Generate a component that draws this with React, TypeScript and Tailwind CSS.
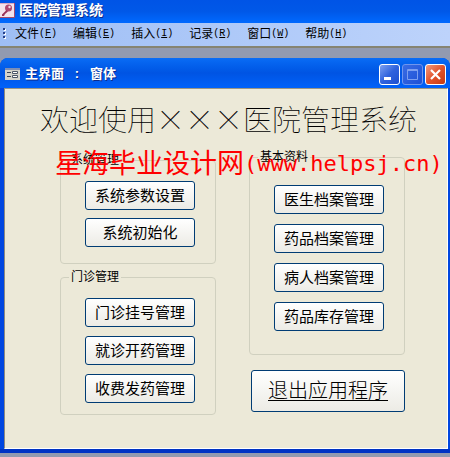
import React from "react";

const menuData = [
  { label: "文件", accessKey: "F" },
  { label: "编辑", accessKey: "E" },
  { label: "插入", accessKey: "I" },
  { label: "记录", accessKey: "R" },
  { label: "窗口", accessKey: "W" },
  { label: "帮助", accessKey: "H" },
];

const systemButtons = ["系统参数设置", "系统初始化"];
const clinicButtons = ["门诊挂号管理", "就诊开药管理", "收费发药管理"];
const dataButtons = [
  "医生档案管理",
  "药品档案管理",
  "病人档案管理",
  "药品库存管理",
];

const App = () => {
  return (
    <div className="flex min-h-screen flex-col bg-[#929ab0] font-['Liberation_Sans','Noto_Sans_CJK_SC',sans-serif] text-black">
      <header className="flex h-[23px] items-center gap-1 bg-linear-to-b from-[#0054e6] via-[#0058e8] to-[#0069ff] pb-1">
        <KeyIcon />
        <span className="text-sm leading-4 font-bold text-white [text-shadow:1px_1px_#0a2a8c]">
          医院管理系统
        </span>
      </header>
      <MenuBar />
      <main className="mt-[10px] mb-1 flex flex-1 flex-col rounded-t-lg border-b-4 border-[#0033c4] bg-[#0046e0]">
        <WindowTitle />
        <div className="relative mr-[2px] ml-1 flex-1 border border-t-[#9b9684] border-r-white border-b-white border-l-[#8c8a80] bg-[#ece9d8] pb-8">
          <h1 className="pt-[10px] pl-[35px] text-[29px] leading-[38px] font-thin whitespace-nowrap">
            欢迎使用
            <span className="font-['Noto_Sans_CJK_SC']">×××</span>
            医院管理系统
          </h1>
          <div className="grid grid-cols-2 items-start gap-[33px] pt-[10px] pr-[42px] pl-[55px]">
            <div className="flex flex-col gap-[6px] pt-[3px]">
              <Group title="系统管理">
                <div className="flex flex-col items-center gap-2 pt-[14px] pb-4 pl-1">
                  {systemButtons.map((label) => (
                    <XpButton key={label} label={label} />
                  ))}
                </div>
              </Group>
              <Group title="门诊管理">
                <div className="flex flex-col items-center gap-[9px] pt-[14px] pb-[11px] pl-1">
                  {clinicButtons.map((label) => (
                    <XpButton key={label} label={label} />
                  ))}
                </div>
              </Group>
            </div>
            <div className="flex flex-col gap-[15px]">
              <Group title="基本资料">
                <div className="flex flex-col items-center gap-[10px] pt-[21px] pb-[23px] pl-1">
                  {dataButtons.map((label) => (
                    <XpButton key={label} label={label} />
                  ))}
                </div>
              </Group>
              <button className="ml-[2px] h-[42px] rounded-[3px] border border-[#003c74] bg-linear-to-b from-white to-[#ecebe5] text-xl leading-6 font-light underline decoration-1 underline-offset-2">
                退出应用程序
              </button>
            </div>
          </div>
          <div className="pointer-events-none absolute top-[57px] left-[50px] flex items-center leading-[36px] whitespace-nowrap text-[#ff0000]">
            <span className="text-[27px]">星海毕业设计网</span>
            <span className="font-['DejaVu_Sans_Mono',monospace] text-[22px]">
              (www.helpsj.cn)
            </span>
          </div>
        </div>
      </main>
    </div>
  );
};

export default App;

const MenuBar = () => {
  return (
    <nav className="flex h-[25px] items-center border-b-2 border-[#868472] bg-linear-to-r from-[#9ebef5] to-[#bdd3fb] pb-px pl-[3px]">
      <svg width="3" height="12" className="mr-[9px]" aria-hidden="true">
        <path d="M1 1h2v2H1zM1 5h2v2H1zM1 9h2v2H1z" fill="#fff" />
        <path d="M0 0h2v2H0zM0 4h2v2H0zM0 8h2v2H0z" fill="#27418b" />
      </svg>
      <div className="flex gap-4">
        {menuData.map((item) => (
          <button
            key={item.label}
            className="flex items-center text-xs leading-4"
          >
            {item.label}
            <span className="font-['Liberation_Mono',monospace] text-[10px]">
              (<u>{item.accessKey}</u>)
            </span>
          </button>
        ))}
      </div>
    </nav>
  );
};

const WindowTitle = () => {
  return (
    <div className="flex h-[30px] items-center rounded-t-lg bg-linear-to-b from-[#0a6cf5] via-[#0054e3] to-[#0062fa] pt-[2px] pr-1 pl-[5px]">
      <FormIcon />
      <span className="ml-[5px] flex-1 text-[13px] leading-4 font-bold whitespace-pre text-white [text-shadow:1px_1px_#0a2a8c]">
        主界面{"   :   "}窗体
      </span>
      <div className="flex gap-[2px]">
        <button
          aria-label="最小化"
          className="size-[21px] rounded-[3px] border border-white bg-linear-to-br from-[#7d9ff0] via-[#2f62dd] to-[#1c4fd0]"
        >
          <svg viewBox="0 0 19 19">
            <path d="M4 12h7v3H4z" fill="#fff" />
          </svg>
        </button>
        <button
          aria-label="最大化"
          disabled
          className="size-[21px] rounded-[3px] border border-[#6f96ee] bg-linear-to-br from-[#3a6ce4] to-[#1c50d6]"
        >
          <svg viewBox="0 0 19 19">
            <path d="M4.500 4.500h10v10h-10zM4 5.500h11" fill="none" stroke="#7d9ff0" />
          </svg>
        </button>
        <button
          aria-label="关闭"
          className="size-[21px] rounded-[3px] border border-white bg-linear-to-br from-[#f0997c] via-[#e2532b] to-[#c8390f]"
        >
          <svg viewBox="0 0 19 19">
            <path d="M5 5l9 9M14 5l-9 9" stroke="#fff" strokeWidth="2.200" />
          </svg>
        </button>
      </div>
    </div>
  );
};

const Group = ({
  title,
  children,
}: {
  title: string;
  children: React.ReactNode;
}) => {
  return (
    <fieldset className="min-w-0 rounded-[4px] border border-[#d0d0bf]">
      <legend className="ml-2 px-[2px] text-xs leading-[14px]">{title}</legend>
      {children}
    </fieldset>
  );
};

const XpButton = ({ label }: { label: string }) => {
  return (
    <button className="h-[29px] w-[110px] rounded-[3px] border border-[#003c74] bg-linear-to-b from-white to-[#ecebe5] text-[15px] leading-5 whitespace-nowrap">
      {label}
    </button>
  );
};

const KeyIcon = () => {
  return (
    <svg width="15" height="16" viewBox="0 0 15 16" aria-hidden="true">
      <path d="M0 1h14v14H0z" fill="#f3e3ec" />
      <path d="M0 15.500h14.500V1" fill="none" stroke="#a34a6c" />
      <path d="M0 1.500h14" stroke="#d9a9c0" />
      <circle cx="8.500" cy="6" r="3.500" fill="#b0486f" />
      <circle cx="9.500" cy="5" r="1.200" fill="#f3dbe5" />
      <path d="M6.500 8L2 12.500v1.500h2l1-2 3-2.500" fill="#9c3358" />
    </svg>
  );
};

const FormIcon = () => {
  return (
    <svg width="15" height="12" viewBox="0 0 15 12" aria-hidden="true">
      <path d="M0 0h15v12H0z" fill="#d5d3cb" />
      <path d="M0 0h15v2H0z" fill="#7d8fb5" />
      <path d="M2 4h4v1H2zM2 8h4v1H2z" fill="#3c4658" />
      <path d="M7.500 3.500h5v2h-5zM7.500 7.500h5v2h-5z" fill="#fff" stroke="#4c5668" />
    </svg>
  );
};
